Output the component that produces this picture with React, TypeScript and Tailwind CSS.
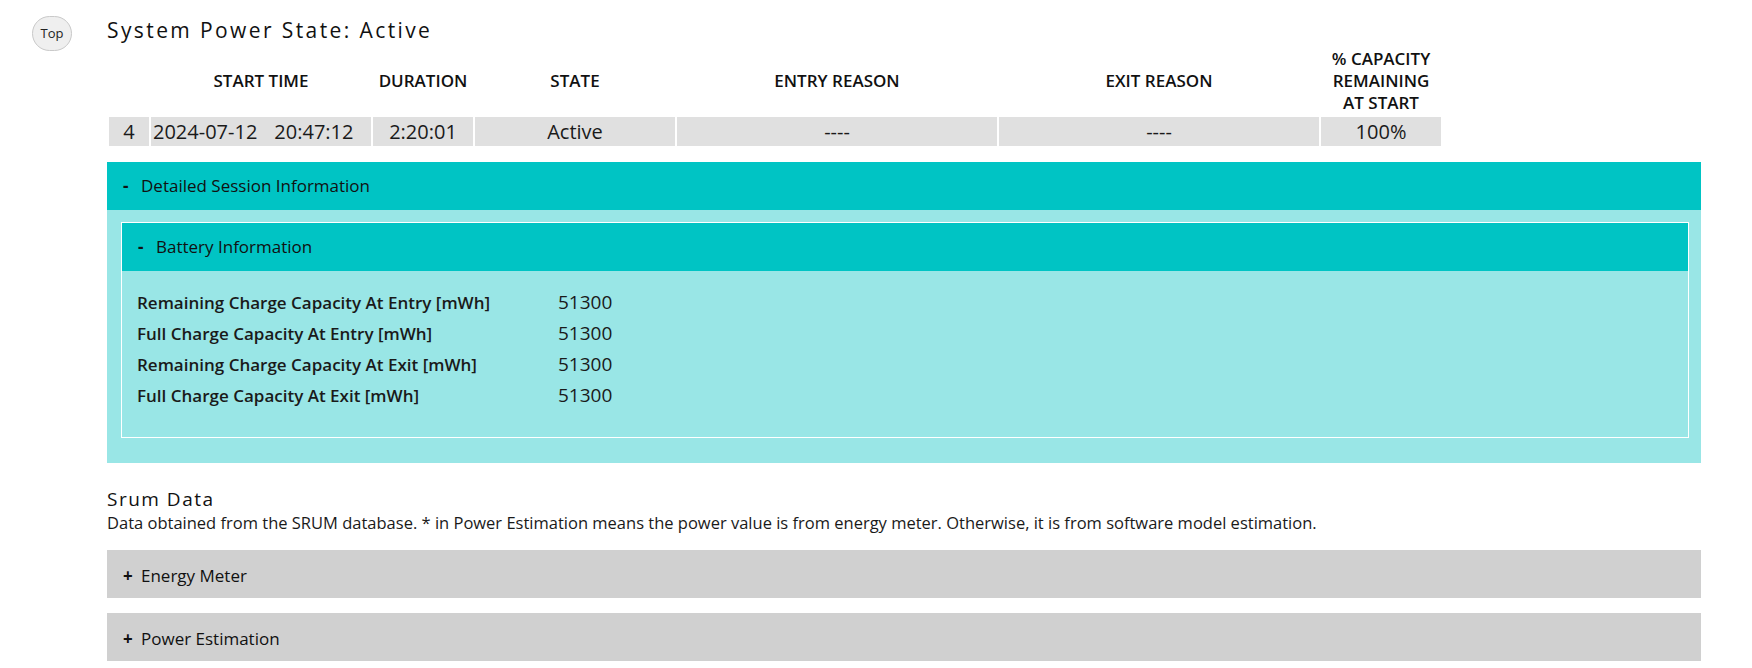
import type { ReactNode } from "react";

const font = { fontFamily: '"Open Sans", "Noto Sans", Arial, sans-serif' };

const batteryRows = [
  { label: "Remaining Charge Capacity At Entry [mWh]", value: "51300" },
  { label: "Full Charge Capacity At Entry [mWh]", value: "51300" },
  { label: "Remaining Charge Capacity At Exit [mWh]", value: "51300" },
  { label: "Full Charge Capacity At Exit [mWh]", value: "51300" },
];

function HeaderCell({ children, w }: { children?: ReactNode; w: string }) {
  return (
    <th className={`${w} px-0 pb-[1px] pt-[2px] align-middle text-center text-[17px] font-semibold uppercase leading-[22px] text-[#111]`}>
      {children}
    </th>
  );
}

function Bar({ sign, title, tone }: { sign: string; title: string; tone: "teal" | "gray" }) {
  return (
    <div
      className={`flex h-[48px] items-center pl-[16px] text-[17px] text-[#111] ${
        tone === "teal" ? "bg-[#00c4c4]" : "bg-[#d0d0d0] pt-[4px]"
      }`}
    >
      <span className="w-[18px] font-bold">{sign}</span>
      <span>{title}</span>
    </div>
  );
}

export default function App() {
  return (
    <div className="flex min-h-[668px] gap-[35px] bg-white pl-[32px] text-[#111]" style={font}>
      <div className="pt-[16px]">
        <button
          type="button"
          className="flex h-[35px] w-[40px] items-center justify-center rounded-full border border-[#c9c9c9] bg-[#efefef] text-[13px] text-[#222]"
        >
          Top
        </button>
      </div>

      <div className="flex w-[1594px] flex-col pt-[16px]">
        <h1 className="text-[21px] font-normal leading-[28px] tracking-[2.4px]">System Power State: Active</h1>

        <table className="w-[1336px] table-fixed border-separate border-spacing-[2px]">
          <thead>
            <tr>
              <HeaderCell w="w-[40px]" />
              <HeaderCell w="w-[220px]">Start Time</HeaderCell>
              <HeaderCell w="w-[100px]">Duration</HeaderCell>
              <HeaderCell w="w-[200px]">State</HeaderCell>
              <HeaderCell w="w-[320px]">Entry Reason</HeaderCell>
              <HeaderCell w="w-[320px]">Exit Reason</HeaderCell>
              <HeaderCell w="w-[120px]">
                % Capacity
                <br />
                Remaining
                <br />
                At Start
              </HeaderCell>
            </tr>
          </thead>
          <tbody>
            <tr className="h-[29px] text-[20px] leading-[29px] text-[#1a1a1a]">
              <td className="bg-[#e0e0e0] p-0 text-center">4</td>
              <td className="whitespace-nowrap bg-[#e0e0e0] p-0 pl-[2px]">
                <span>2024-07-12</span>
                <span className="ml-[17px]">20:47:12</span>
              </td>
              <td className="bg-[#e0e0e0] p-0 text-center">2:20:01</td>
              <td className="bg-[#e0e0e0] p-0 text-center">Active</td>
              <td className="bg-[#e0e0e0] p-0 text-center">----</td>
              <td className="bg-[#e0e0e0] p-0 text-center">----</td>
              <td className="bg-[#e0e0e0] p-0 text-center">100%</td>
            </tr>
          </tbody>
        </table>

        <section className="mt-[14px]">
          <Bar sign="-" title="Detailed Session Information" tone="teal" />
          <div className="bg-[#99e6e6] pb-[25px] pl-[14px] pr-[12px] pt-[12px]">
            <div className="border border-white">
              <Bar sign="-" title="Battery Information" tone="teal" />
              <div className="grid grid-cols-[421px_1fr] pb-[26px] pl-[15px] pt-[16px]">
                {batteryRows.map((row) => (
                  <div key={row.label} className="contents">
                    <div className="h-[31px] text-[17px] font-semibold leading-[31px] text-[#1a1a1a]">{row.label}</div>
                    <div className="h-[31px] text-[19px] leading-[31px] text-[#1a1a1a]">{row.value}</div>
                  </div>
                ))}
              </div>
            </div>
          </div>
        </section>

        <h2 className="mt-[23px] text-[19px] font-normal leading-[26px] tracking-[1.5px]">Srum Data</h2>
        <p className="text-[16.5px] leading-[22px] text-[#1a1a1a]">
          Data obtained from the SRUM database. * in Power Estimation means the power value is from energy meter.
          Otherwise, it is from software model estimation.
        </p>

        <div className="mt-[16px] flex flex-col gap-[15px]">
          <Bar sign="+" title="Energy Meter" tone="gray" />
          <Bar sign="+" title="Power Estimation" tone="gray" />
        </div>
      </div>
    </div>
  );
}
